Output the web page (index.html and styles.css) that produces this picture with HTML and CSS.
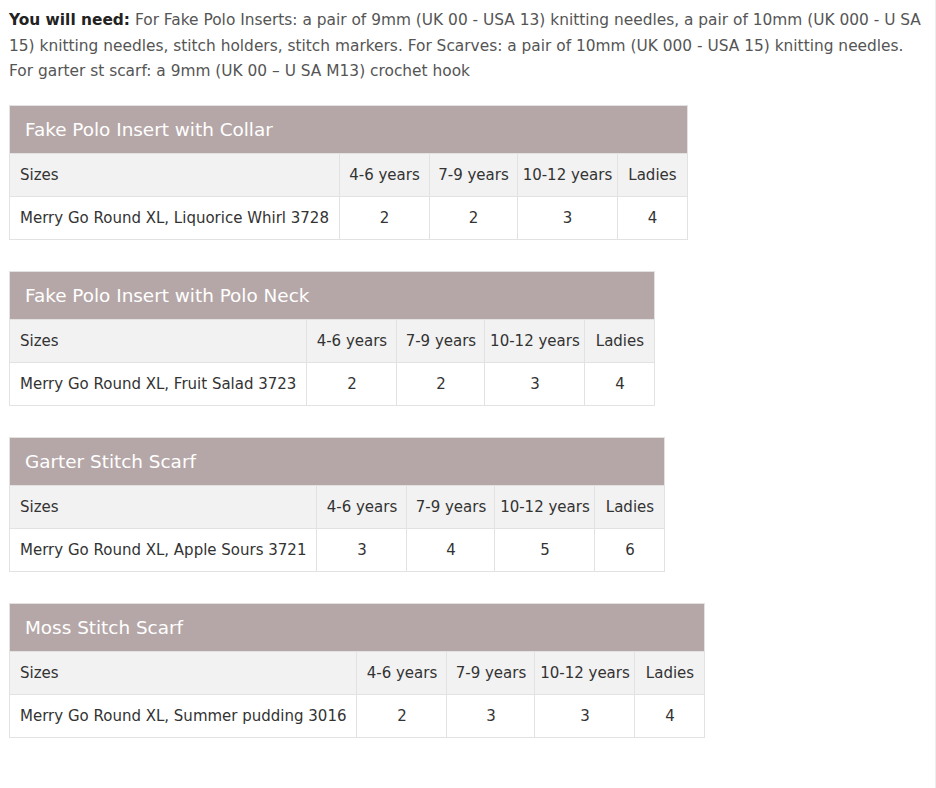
FILE: index.html
```html
<!DOCTYPE html>
<html>
<head>
<meta charset="utf-8">
<link rel="stylesheet" href="styles.css">
</head>
<body>
<div class="page">
  <p class="intro"><strong>You will need:</strong> For Fake Polo Inserts: a pair of 9mm (UK 00 - USA 13) knitting needles, a pair of 10mm (UK 000 - U SA 15) knitting needles, stitch holders, stitch markers. For Scarves: a pair of 10mm (UK 000 - USA 15) knitting needles. For garter st scarf: a 9mm (UK 00 – U SA M13) crochet hook</p>

  <table class="yarn">
    <thead><tr><th colspan="5" class="title">Fake Polo Insert with Collar</th></tr></thead>
    <tbody>
      <tr class="sizes"><td class="name">Sizes</td><td class="s1">4-6 years</td><td class="s2">7-9 years</td><td class="s3">10-12 years</td><td class="s4">Ladies</td></tr>
      <tr><td class="name">Merry Go Round XL, Liquorice Whirl 3728</td><td class="s1">2</td><td class="s2">2</td><td class="s3">3</td><td class="s4">4</td></tr>
    </tbody>
  </table>

  <table class="yarn">
    <thead><tr><th colspan="5" class="title">Fake Polo Insert with Polo Neck</th></tr></thead>
    <tbody>
      <tr class="sizes"><td class="name">Sizes</td><td class="s1">4-6 years</td><td class="s2">7-9 years</td><td class="s3">10-12 years</td><td class="s4">Ladies</td></tr>
      <tr><td class="name">Merry Go Round XL, Fruit Salad 3723</td><td class="s1">2</td><td class="s2">2</td><td class="s3">3</td><td class="s4">4</td></tr>
    </tbody>
  </table>

  <table class="yarn">
    <thead><tr><th colspan="5" class="title">Garter Stitch Scarf</th></tr></thead>
    <tbody>
      <tr class="sizes"><td class="name">Sizes</td><td class="s1">4-6 years</td><td class="s2">7-9 years</td><td class="s3">10-12 years</td><td class="s4">Ladies</td></tr>
      <tr><td class="name">Merry Go Round XL, Apple Sours 3721</td><td class="s1">3</td><td class="s2">4</td><td class="s3">5</td><td class="s4">6</td></tr>
    </tbody>
  </table>

  <table class="yarn">
    <thead><tr><th colspan="5" class="title">Moss Stitch Scarf</th></tr></thead>
    <tbody>
      <tr class="sizes"><td class="name">Sizes</td><td class="s1">4-6 years</td><td class="s2">7-9 years</td><td class="s3">10-12 years</td><td class="s4">Ladies</td></tr>
      <tr><td class="name">Merry Go Round XL, Summer pudding 3016</td><td class="s1">2</td><td class="s2">3</td><td class="s3">3</td><td class="s4">4</td></tr>
    </tbody>
  </table>
</div>
</body>
</html>
```

FILE: styles.css
```css
html, body {
  margin: 0;
  padding: 0;
  background: #fff;
}
body {
  font-family: "DejaVu Sans", "Open Sans", sans-serif;
  color: #555;
}
.page {
  box-sizing: border-box;
  width: 936px;
  min-height: 788px;
  padding: 8px 0 0 9px;
  border-right: 1px solid #ececec;
}
.intro {
  margin: 0 0 20px;
  font-size: 15.4px;
  line-height: 25.5px;
  color: #555;
  padding-right: 8px;
}
.intro strong {
  color: #222;
  font-weight: 700;
}
.yarn {
  border-collapse: collapse;
  margin-bottom: 31px;
  font-size: 15px;
  color: #333;
}
.yarn .title {
  background: #b5a7a7;
  color: #fff;
  font-weight: 500;
  font-size: 18.4px;
  text-align: left;
  height: 47px;
  padding: 0 15px;
  border: 1px solid #e2e2e2;
}
.yarn td {
  border: 1px solid #e2e2e2;
  height: 42px;
  padding: 0 10px;
  text-align: center;
  white-space: nowrap;
}
.yarn td.name {
  text-align: left;
  padding: 0 10px;
}
.yarn td.s1,
.yarn td.s2,
.yarn td.s3,
.yarn td.s4 {
  padding: 0 4px;
}
.yarn td.s1 { width: 81px; }
.yarn td.s2 { width: 79px; }
.yarn td.s3 { width: 91px; }
.yarn td.s4 { width: 61px; }
.yarn .sizes td {
  background: #f2f2f2;
}
```
